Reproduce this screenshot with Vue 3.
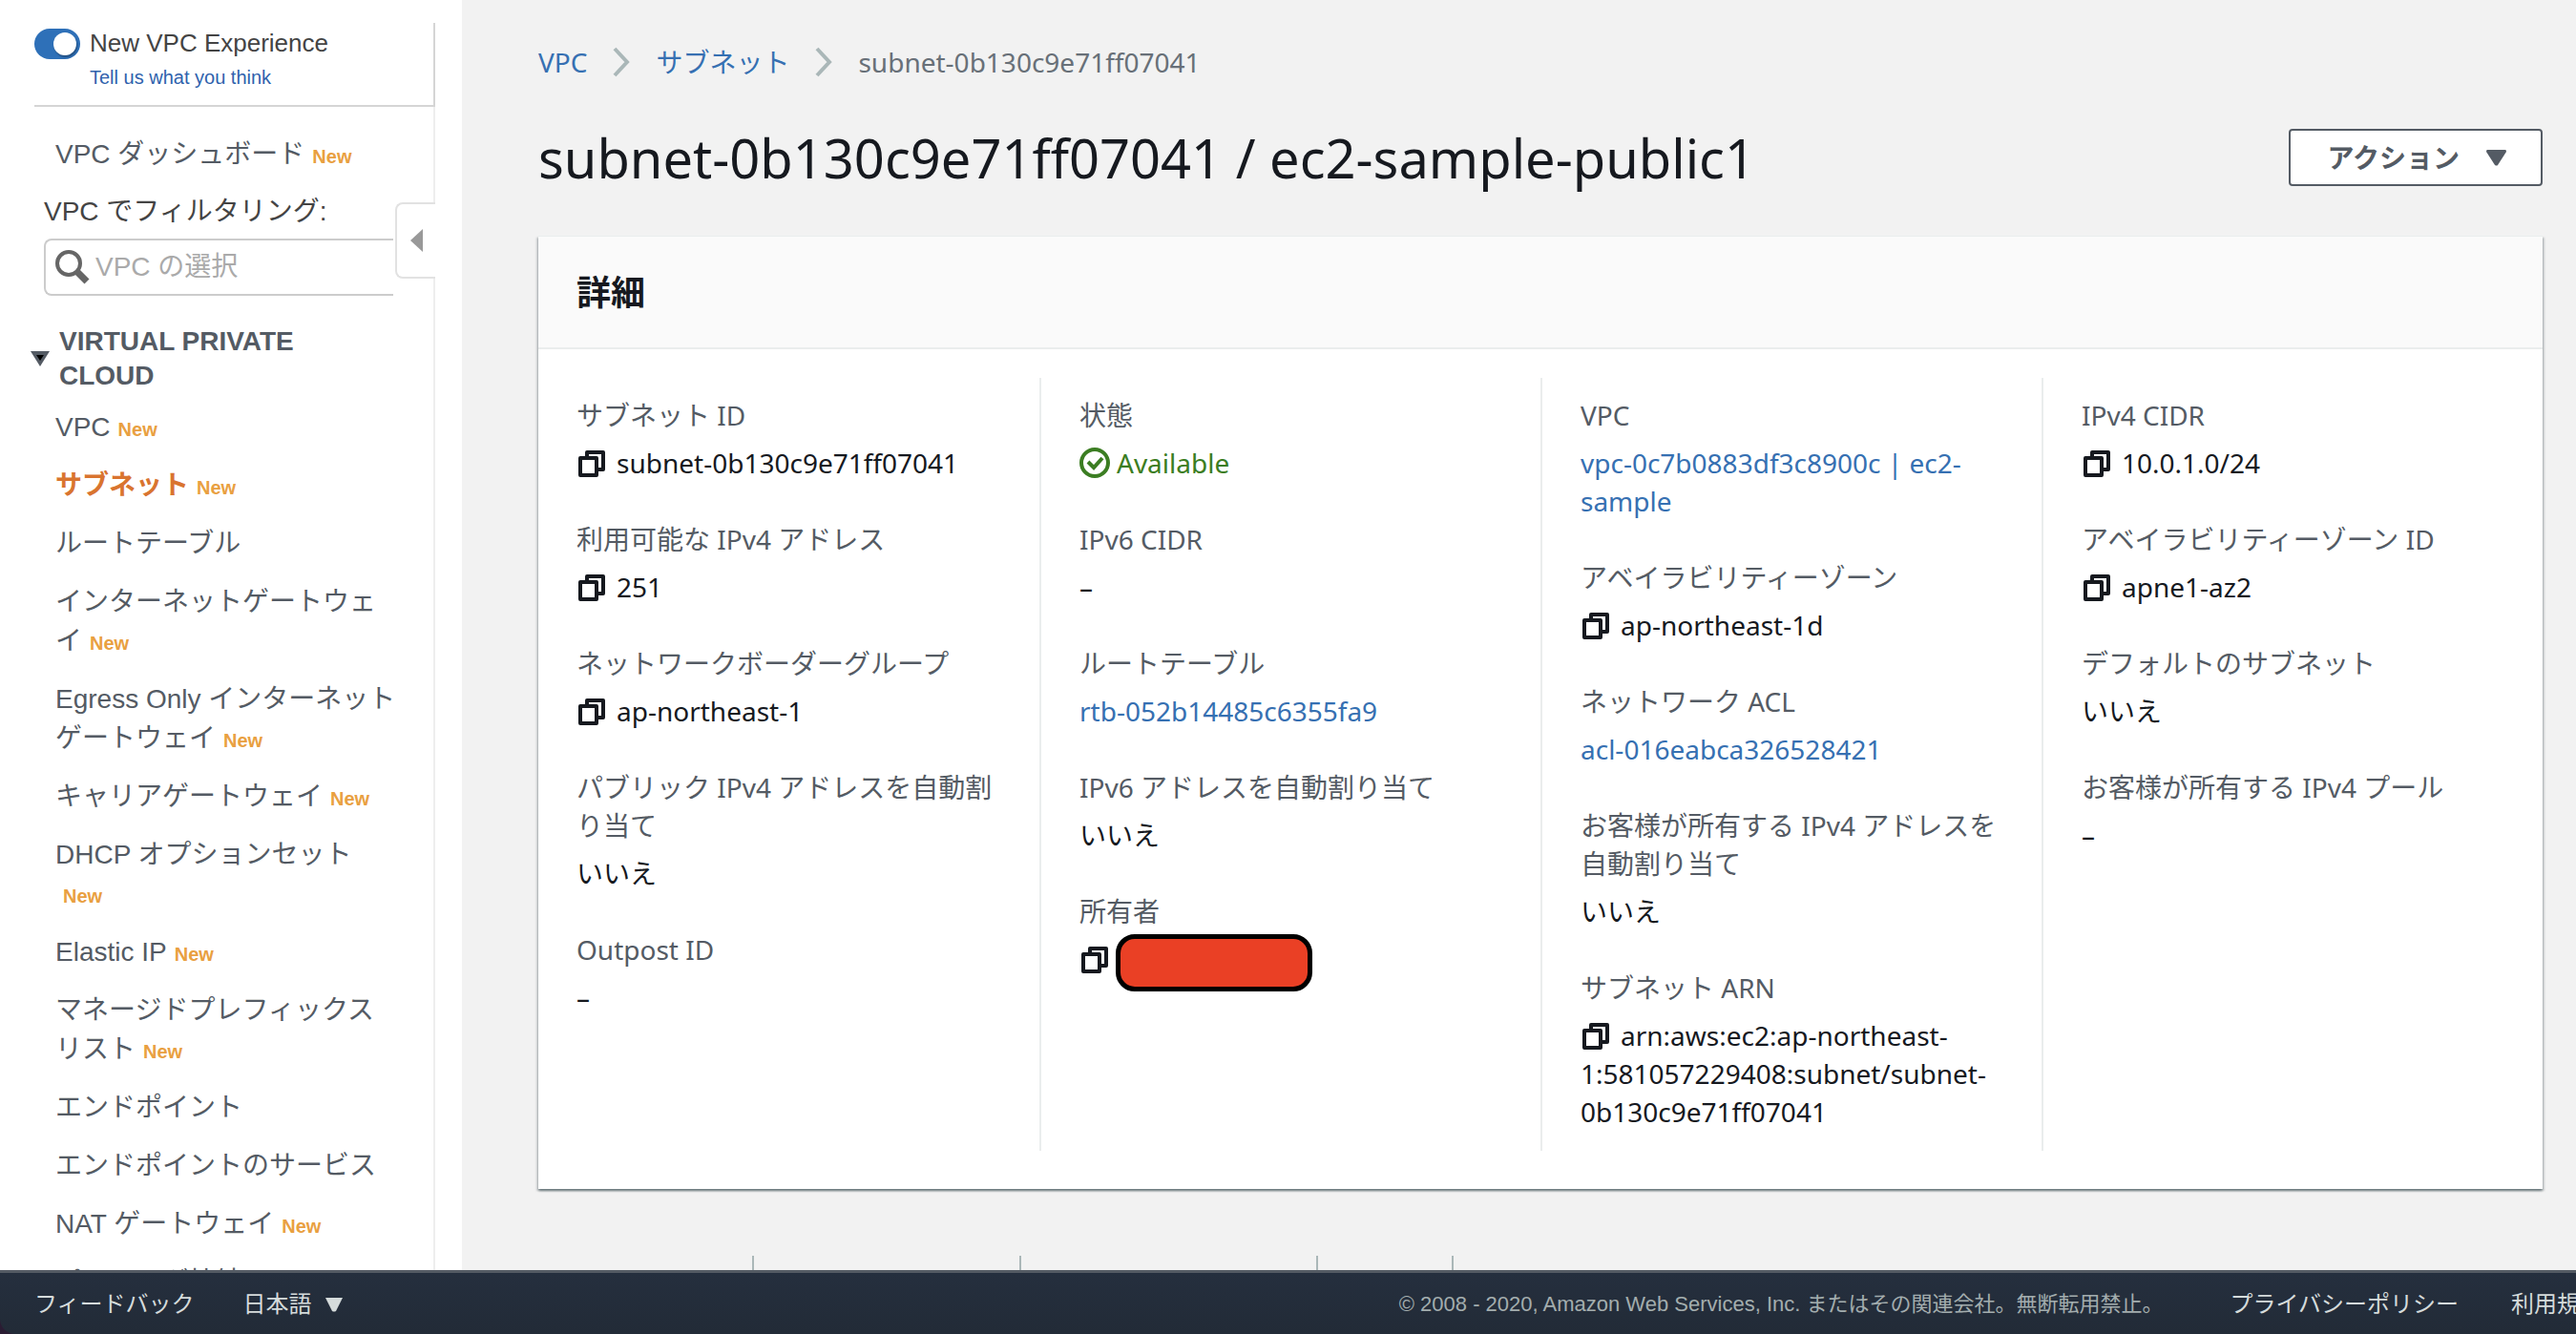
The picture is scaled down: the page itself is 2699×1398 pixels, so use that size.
<script setup>
import { ref } from 'vue'

const newExperience = ref(true)

const navItems = [
  { text: 'VPC', isNew: true },
  { text: 'サブネット', isNew: true, active: true },
  { text: 'ルートテーブル' },
  { text: 'インターネットゲートウェイ', isNew: true },
  { text: 'Egress Only インターネットゲートウェイ', isNew: true },
  { text: 'キャリアゲートウェイ', isNew: true },
  { text: 'DHCP オプションセット', isNew: true },
  { text: 'Elastic IP', isNew: true },
  { text: 'マネージドプレフィックスリスト', isNew: true },
  { text: 'エンドポイント' },
  { text: 'エンドポイントのサービス' },
  { text: 'NAT ゲートウェイ', isNew: true },
  { text: 'ピアリング接続' },
]

const columns = [
  [
    { label: 'サブネット ID', value: 'subnet-0b130c9e71ff07041', copy: true },
    { label: '利用可能な IPv4 アドレス', value: '251', copy: true },
    { label: 'ネットワークボーダーグループ', value: 'ap-northeast-1', copy: true },
    { label: 'パブリック IPv4 アドレスを自動割り当て', value: 'いいえ' },
    { label: 'Outpost ID', value: '–' },
  ],
  [
    { label: '状態', value: 'Available', status: true },
    { label: 'IPv6 CIDR', value: '–' },
    { label: 'ルートテーブル', value: 'rtb-052b14485c6355fa9', link: true },
    { label: 'IPv6 アドレスを自動割り当て', value: 'いいえ' },
    { label: '所有者', value: '', copy: true, redacted: true },
  ],
  [
    { label: 'VPC', value: 'vpc-0c7b0883df3c8900c | ec2-sample', link: true },
    { label: 'アベイラビリティーゾーン', value: 'ap-northeast-1d', copy: true },
    { label: 'ネットワーク ACL', value: 'acl-016eabca326528421', link: true },
    { label: 'お客様が所有する IPv4 アドレスを自動割り当て', value: 'いいえ' },
    { label: 'サブネット ARN', value: 'arn:aws:ec2:ap-northeast-1:581057229408:subnet/subnet-0b130c9e71ff07041', copy: true },
  ],
  [
    { label: 'IPv4 CIDR', value: '10.0.1.0/24', copy: true },
    { label: 'アベイラビリティーゾーン ID', value: 'apne1-az2', copy: true },
    { label: 'デフォルトのサブネット', value: 'いいえ' },
    { label: 'お客様が所有する IPv4 プール', value: '–' },
  ],
]

const tabs = ['フローログ', 'ルートテーブル', 'ネットワーク ACL', 'タグ']
</script>

<template>
  <div class="console">
    <div class="workspace">
      <aside class="sidebar">
        <div class="experience">
          <input id="new-experience" v-model="newExperience" type="checkbox" role="switch" class="switch">
          <div class="experience-text">
            <label for="new-experience">New VPC Experience</label>
            <a href="#">Tell us what you think</a>
          </div>
        </div>

        <nav class="nav">
          <button class="collapse" type="button" aria-label="ナビゲーションを閉じる">
            <svg width="14" height="24" viewBox="0 0 14 24"><path d="M13 0v24L0 12z" fill="#999" /></svg>
          </button>

          <a href="#" class="nav-link dashboard">VPC ダッシュボード<span class="new">New</span></a>

          <label for="vpc-filter" class="filter-label">VPC でフィルタリング:</label>
          <div class="filter">
            <svg width="36" height="36" viewBox="0 0 36 36" fill="none">
              <circle cx="14" cy="14" r="12" stroke="#666" stroke-width="4" />
              <path d="M23 23l10 10" stroke="#666" stroke-width="7" />
            </svg>
            <input id="vpc-filter" type="text" placeholder="VPC の選択">
          </div>

          <h2 class="section">
            <svg width="20" height="16" viewBox="0 0 20 16">
              <path d="M0 0h20L10 16z" fill="#545b64" />
              <path d="M6 4h8l-4 6z" fill="#000" />
            </svg>
            <span>VIRTUAL PRIVATE CLOUD</span>
          </h2>

          <ul class="nav-list">
            <li v-for="item in navItems" :key="item.text">
              <a href="#" class="nav-link" :class="{ active: item.active }">{{ item.text }}<span v-if="item.isNew" class="new">New</span></a>
            </li>
          </ul>
        </nav>
      </aside>

      <main class="content">
        <nav class="breadcrumb">
          <a href="#">VPC</a>
          <svg width="18" height="32" viewBox="0 0 18 32" fill="none"><path d="M2 2l13 14L2 30" stroke="#aab7b8" stroke-width="4" /></svg>
          <a href="#">サブネット</a>
          <svg width="18" height="32" viewBox="0 0 18 32" fill="none"><path d="M2 2l13 14L2 30" stroke="#aab7b8" stroke-width="4" /></svg>
          <span>subnet-0b130c9e71ff07041</span>
        </nav>

        <header class="title-row">
          <h1>subnet-0b130c9e71ff07041 / ec2-sample-public1</h1>
          <button class="actions" type="button">
            アクション
            <svg width="21" height="17" viewBox="0 0 21 17"><path d="M1 0h19q1 0 1 2l-9 14q-1 1-3 0L0 2q0-2 1-2z" fill="#545b64" /></svg>
          </button>
        </header>

        <section class="card">
          <h2 class="card-head">詳細</h2>
          <div class="card-body">
            <dl v-for="(column, i) in columns" :key="i" class="column">
              <div v-for="field in column" :key="field.label" class="field">
                <dt>{{ field.label }}</dt>
                <dd :class="{ status: field.status }">
                  <svg v-if="field.copy" class="copy" width="32" height="28" viewBox="-1 0 32 28" fill="none">
                    <path d="M10 7V2h17v18h-5" stroke="#16191f" stroke-width="4" stroke-linejoin="round" />
                    <rect x="3" y="8" width="17" height="18" stroke="#16191f" stroke-width="4" stroke-linejoin="round" />
                  </svg>
                  <svg v-if="field.status" class="check" width="32" height="32" viewBox="0 0 32 32" fill="none">
                    <circle cx="16" cy="16" r="14" stroke="#3b7d22" stroke-width="4" />
                    <path d="M9 15l6 6 9-10" stroke="#3b7d22" stroke-width="4" />
                  </svg>
                  <a v-if="field.link" href="#">{{ field.value }}</a>
                  <template v-else>{{ field.value }}</template>
                  <span v-if="field.redacted" class="redaction"></span>
                </dd>
              </div>
            </dl>
          </div>
        </section>

        <div class="tabs" role="tablist">
          <button v-for="(tab, i) in tabs" :key="tab" type="button" role="tab" :class="{ current: i === 0 }">{{ tab }}</button>
        </div>
      </main>
    </div>

    <footer class="footer">
      <a href="#">フィードバック</a>
      <button type="button" class="language">
        日本語
        <svg width="18" height="15" viewBox="0 0 18 15"><path d="M0 0h18l-7 14q-2 1-4 0z" fill="#d5dbdb" /></svg>
      </button>
      <small>© 2008 - 2020, Amazon Web Services, Inc. またはその関連会社。無断転用禁止。</small>
      <a href="#">プライバシーポリシー</a>
      <a href="#" class="terms">利用規約</a>
    </footer>
  </div>
</template>

<style>
body {
  background: #2a1c33;
}
</style>

<style scoped>
.console {
  display: flex;
  flex-direction: column;
  height: 100vh;
  overflow: hidden;
  font-family: "Noto Sans", "Noto Sans CJK JP", sans-serif;
  font-size: 28px;
  line-height: 40px;
  color: #16191f;
}

a {
  color: #3670b2;
  text-decoration: none;
}

button {
  font: inherit;
  cursor: pointer;
}

h1, h2, ul, dl, dd {
  margin: 0;
  padding: 0;
}

svg {
  flex: none;
}

.workspace {
  flex: 1;
  min-height: 0;
  display: flex;
  overflow: hidden;
  background: #f2f2f2;
}

/* Sidebar */
.sidebar {
  flex: none;
  box-sizing: border-box;
  width: 484px;
  padding: 24px 28px 0 0;
  background: #fff;
  font-family: "Liberation Sans", "Noto Sans CJK JP", sans-serif;
}

.experience {
  display: flex;
  gap: 10px;
  box-sizing: border-box;
  height: 88px;
  margin-left: 36px;
  border-right: 2px solid #d5d5d5;
  border-bottom: 2px solid #d5d5d5;
}

.switch {
  appearance: none;
  flex: none;
  display: flex;
  justify-content: flex-end;
  width: 48px;
  height: 32px;
  margin: 6px 0 0;
  padding: 4px;
  box-sizing: border-box;
  border-radius: 16px;
  background: #2e70b8;
}

.switch::before {
  content: "";
  width: 24px;
  height: 24px;
  border-radius: 50%;
  background: #fff;
  box-shadow: 1px 2px 2px rgba(0, 0, 0, 0.3);
}

.switch:not(:checked) {
  justify-content: flex-start;
  background: #879596;
}

.experience-text {
  display: flex;
  flex-direction: column;
  padding-top: 1px;
  font-size: 26px;
  color: #444;
}

.experience-text a {
  font-size: 20px;
  line-height: 32px;
  color: #2f62ad;
}

.nav {
  position: relative;
  padding: 29px 36px 40px 58px;
  border-right: 2px solid #eee;
}

.collapse {
  position: absolute;
  top: 100px;
  right: -2px;
  display: flex;
  align-items: center;
  box-sizing: border-box;
  width: 42px;
  height: 80px;
  padding: 0 0 0 14px;
  border: 2px solid #e2e2e2;
  border-right: 0;
  border-radius: 8px 0 0 8px;
  background: #fff;
}

.nav-link {
  display: block;
  line-height: 41px;
  color: #545b64;
}

.nav-link.active {
  font-weight: 700;
  color: #d9742f;
}

.new {
  display: inline-block;
  margin: 0 4px 0 8px;
  font-size: 20px;
  font-weight: 700;
  line-height: 24px;
  color: #e9a041;
}

.filter-label {
  display: block;
  margin: 20px 0 8px -12px;
  color: #444;
}

.filter {
  display: flex;
  align-items: center;
  gap: 6px;
  box-sizing: border-box;
  height: 60px;
  margin: 0 6px 0 -12px;
  padding-left: 10px;
  border: 2px solid #ccc;
  border-right: 0;
  border-radius: 8px 0 0 8px;
}

.filter input {
  flex: 1;
  min-width: 0;
  padding: 0;
  border: 0;
  outline: 0;
  background: none;
  font: inherit;
}

.filter input::placeholder {
  color: #aaa;
}

.section {
  display: flex;
  align-items: center;
  gap: 10px;
  margin: 30px 0 15px -26px;
  padding-right: 40px;
  font-size: 28px;
  line-height: 36px;
  color: #545b64;
}

.nav-list {
  display: flex;
  flex-direction: column;
  gap: 20px;
  list-style: none;
}

/* Content */
.content {
  flex: 1;
  min-width: 0;
  padding: 45px 35px 0 80px;
}

.breadcrumb {
  display: flex;
  align-items: center;
  gap: 27px;
  color: #687078;
}

.title-row {
  display: flex;
  align-items: center;
  justify-content: space-between;
  margin: 40px 0 42px;
}

h1 {
  font-size: 56px;
  font-weight: 400;
  line-height: 80px;
}

.actions {
  display: flex;
  align-items: center;
  gap: 28px;
  height: 60px;
  padding: 0 36px 0 38px;
  border: 2px solid #545b64;
  border-radius: 4px;
  background: #fff;
  font-weight: 700;
  color: #545b64;
}

.card {
  border-top: 1px solid #eaeded;
  background: #fff;
  box-shadow: 0 2px 2px rgba(0, 28, 36, 0.4), 2px 2px 2px rgba(0, 28, 36, 0.15), -2px 2px 2px rgba(0, 28, 36, 0.15);
}

.card-head {
  padding: 35px 40px 33px;
  border-bottom: 2px solid #eaeded;
  background: #fafafa;
  font-size: 36px;
  line-height: 48px;
}

.card-body {
  display: grid;
  grid-template-columns: repeat(4, 1fr);
  padding: 30px 0 40px;
}

.column {
  display: flex;
  flex-direction: column;
  gap: 40px;
  padding: 19px 38px 21px 40px;
}

.column + .column {
  border-left: 2px solid #eaeded;
}

dt {
  margin-bottom: 10px;
  color: #545b64;
}

dd {
  position: relative;
  min-height: 40px;
}

.copy {
  margin-right: 10px;
  vertical-align: -4px;
}

.status {
  display: flex;
  align-items: center;
  gap: 7px;
  color: #3b7d22;
}

.redaction {
  position: absolute;
  top: -6px;
  left: 38px;
  box-sizing: border-box;
  width: 206px;
  height: 60px;
  border: 5px solid #000;
  border-radius: 20px;
  background: #ea4025;
}

.tabs {
  display: flex;
  margin-top: 70px;
}

.tabs button {
  height: 60px;
  padding: 0 42px;
  border: 0;
  border-right: 2px solid #aab7b8;
  background: none;
  color: #545b64;
}

.tabs .current {
  color: #d9742f;
}

/* Footer */
.footer {
  flex: none;
  display: flex;
  align-items: center;
  box-sizing: border-box;
  height: 67px;
  padding: 2px 0 0 36px;
  border-top: 3px solid #545b64;
  border-bottom-left-radius: 16px;
  background: linear-gradient(#252f3e, #222b37);
  font-family: "Liberation Sans", "Noto Sans CJK JP", sans-serif;
  font-size: 24px;
  white-space: nowrap;
}

.footer a,
.language {
  color: #d5dbdb;
}

.language {
  display: flex;
  align-items: center;
  gap: 14px;
  margin-left: 51px;
  padding: 0;
  border: 0;
  background: none;
}

.footer small {
  margin: 0 70px 0 auto;
  font-size: 22px;
  color: #a3adae;
}

.footer .terms {
  margin: 0 -28px 0 55px;
}
</style>
